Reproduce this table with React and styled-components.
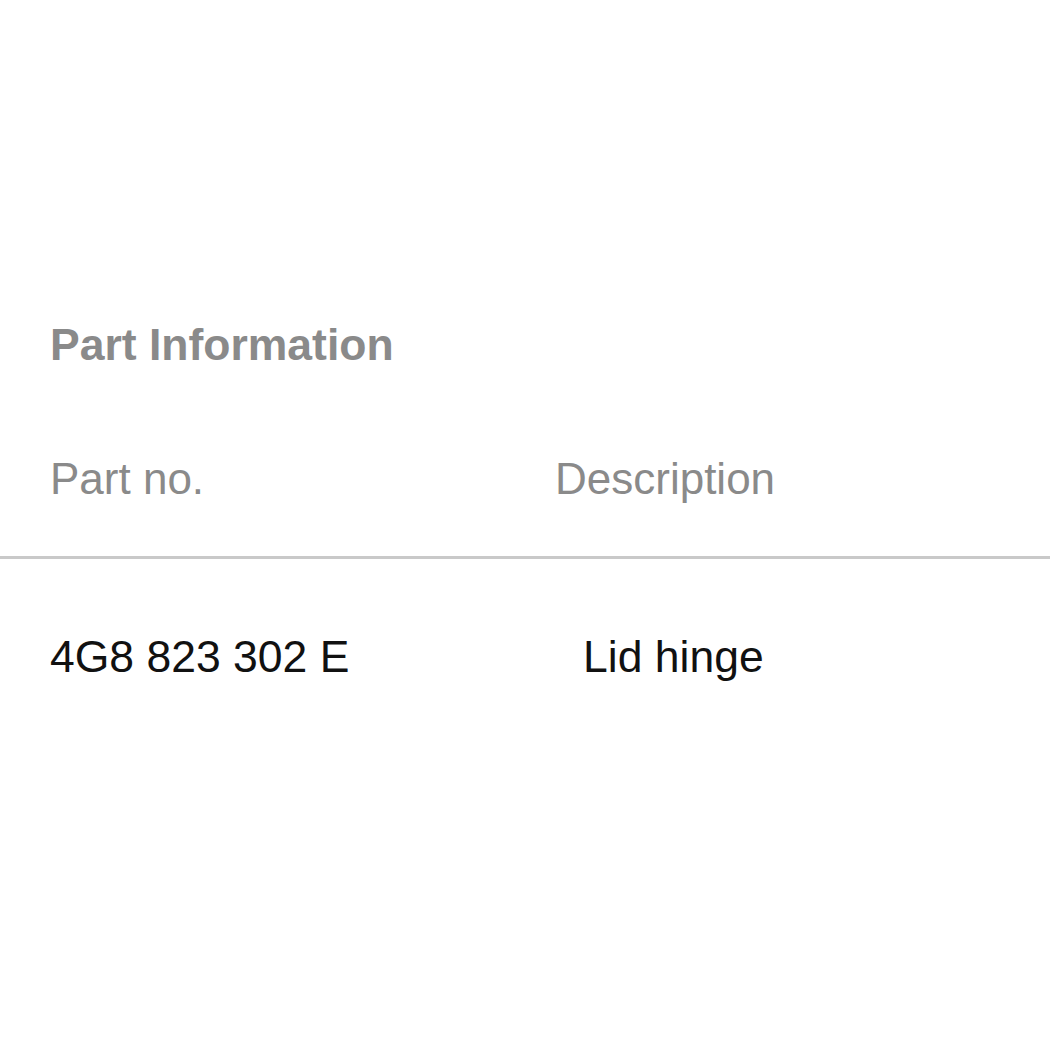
import React from 'react';
import styled, { createGlobalStyle } from 'styled-components';

const GlobalStyle = createGlobalStyle`
  html, body {
    margin: 0;
    padding: 0;
    background: #ffffff;
    font-family: "Liberation Sans", Arial, sans-serif;
  }
`;

const Page = styled.div`
  width: 1050px;
  height: 1050px;
  padding-top: 320px;
  box-sizing: border-box;
  overflow: hidden;
`;

const Title = styled.h2`
  margin: 0 0 84px;
  padding-left: 50px;
  font-size: 44.5px;
  line-height: 50px;
  font-weight: bold;
  color: #8a8a8a;
`;

const Row = styled.div`
  display: grid;
  grid-template-columns: 505px 1fr;
  padding-left: 50px;
  padding-top: ${(p) => (p.$head ? '0' : '73px')};
  padding-bottom: ${(p) => (p.$head ? '52px' : '0')};
  border-bottom: ${(p) => (p.$head ? '3px solid #c9c9c9' : 'none')};
`;

const Cell = styled.div`
  font-size: ${(p) => (p.$head ? '44px' : '44.5px')};
  line-height: 50px;
  color: ${(p) => (p.$head ? '#8a8a8a' : '#111111')};
  padding-left: ${(p) => (p.$indent ? '28px' : '0')};
  white-space: nowrap;
`;

const parts = [{ no: '4G8 823 302 E', desc: 'Lid hinge' }];

export default function App() {
  return (
    <Page>
      <GlobalStyle />
      <Title>Part Information</Title>
      <Row $head>
        <Cell $head>Part no.</Cell>
        <Cell $head>Description</Cell>
      </Row>
      {parts.map((p) => (
        <Row key={p.no}>
          <Cell>{p.no}</Cell>
          <Cell $indent>{p.desc}</Cell>
        </Row>
      ))}
    </Page>
  );
}
